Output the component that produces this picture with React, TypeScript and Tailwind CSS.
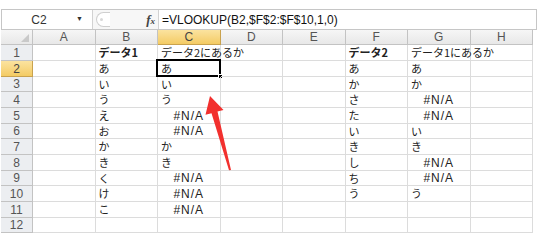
import React from 'react';

type Cell = { t: string; bold?: boolean };

const cols = ['A', 'B', 'C', 'D', 'E', 'F', 'G', 'H'];
const colB = ['あ', 'い', 'う', 'え', 'お', 'か', 'き', 'く', 'け', 'こ'];
const colC = ['あ', 'い', 'う', '#N/A', '#N/A', 'か', 'き', '#N/A', '#N/A', '#N/A'];
const colF = ['あ', 'か', 'さ', 'た', 'い', 'き', 'し', 'ち', 'う'];
const colG = ['あ', 'か', '#N/A', '#N/A', 'い', 'き', '#N/A', '#N/A', 'う'];

// row heights alternate a little so 12 rows end where the sheet ends
const rowH = ['h-[16px]', 'h-[16px]', 'h-[15px]', 'h-[16px]', 'h-[16px]', 'h-[15px]', 'h-[16px]', 'h-[16px]', 'h-[15px]', 'h-[16px]', 'h-[16px]', 'h-[15px]'];

const rows: Cell[][] = Array.from({ length: 12 }, (_, r) => {
  if (r === 0) {
    return [
      { t: '' },
      { t: 'データ1', bold: true },
      { t: 'データ2にあるか' },
      { t: '' },
      { t: '' },
      { t: 'データ2', bold: true },
      { t: 'データ1にあるか' },
      { t: '' },
    ];
  }
  const i = r - 1;
  return [
    { t: '' },
    { t: colB[i] ?? '' },
    { t: colC[i] ?? '' },
    { t: '' },
    { t: '' },
    { t: colF[i] ?? '' },
    { t: colG[i] ?? '' },
    { t: '' },
  ];
});

const jp = "font-['Noto_Sans_CJK_JP','Liberation_Sans',sans-serif]";
const lat = "font-['Liberation_Sans',Arial,sans-serif]";

function GridCell({ cell, selected }: { cell: Cell; selected: boolean }) {
  const isErr = cell.t === '#N/A';
  return (
    <div className="relative flex items-center border-r border-b border-[#dcdcdc] overflow-visible">
      {isErr ? (
        <span className={`w-full text-center text-[12px] leading-none tracking-[1px] text-[#222] ${lat}`}>{cell.t}</span>
      ) : (
        <span
          className={`pl-[3px] whitespace-nowrap text-[11px] leading-none text-[#222] ${jp} ${cell.bold ? 'font-bold' : ''}`}
        >
          {cell.t}
        </span>
      )}
      {selected && (
        <div className="absolute -left-[2px] -top-[2px] -right-px -bottom-px border-2 border-black">
          <div className="absolute -right-[4px] -bottom-[4px] w-[5px] h-[5px] bg-black border border-white" />
        </div>
      )}
    </div>
  );
}

export default function App() {
  return (
    <div className={`relative w-[539px] h-[240px] overflow-hidden bg-white ${lat}`}>
      {/* Formula bar */}
      <div className="mt-[9px] ml-px mr-[2px] flex h-[21px] border border-[#c6c6c6] bg-white">
        <div className="flex w-[91px] items-center border-r border-[#d2d2d2]">
          <span className="w-[74px] text-center text-[12px] text-[#333]">C2</span>
          <span className="text-[7px] text-[#333]">▼</span>
        </div>
        <div className="flex w-[65px] items-center bg-[#f7f7f7]">
          <div className="ml-[3px] flex h-[15px] w-[14px] items-center rounded-l-full border-l border-y border-[#cfcfcf] bg-white pl-[3px]">
            <span className="h-[3px] w-[3px] rounded-full bg-[#d8d8d8]" />
          </div>
          <span className="ml-auto mr-[3px] font-['Liberation_Serif',serif] text-[13px] font-bold italic leading-none text-[#444]">
            f<span className="text-[9px]">x</span>
          </span>
        </div>
        <div className="flex flex-1 items-center border-l border-[#d2d2d2] pl-[3px] text-[12px] text-[#111]">
          =VLOOKUP(B2,$F$2:$F$10,1,0)
        </div>
      </div>

      {/* Sheet */}
      <div className="ml-px w-[533px]">
        <div className="grid h-[15px] grid-cols-[32px_repeat(8,62.5px)]">
          <div className="relative border-r border-b border-[#c3c3c3] bg-linear-to-b from-[#f6f6f6] to-[#e8e8e8]">
            <svg className="absolute right-[3px] bottom-[2px]" width="8" height="8">
              <polygon points="8,0 8,8 0,8" fill="#c9c9c9" />
            </svg>
          </div>
          {cols.map((c) => (
            <div
              key={c}
              className={`flex items-center justify-center border-r border-b text-[12px] leading-none ${
                c === 'C'
                  ? 'border-[#c9a24e] bg-linear-to-b from-[#fbe39f] to-[#f4cb63] text-[#444]'
                  : 'border-[#c3c3c3] bg-linear-to-b from-[#f6f6f6] to-[#e8e8e8] text-[#555]'
              }`}
            >
              {c}
            </div>
          ))}
        </div>
        {rows.map((row, r) => (
          <div key={r} className={`grid ${rowH[r]} grid-cols-[32px_repeat(8,62.5px)]`}>
            <div
              className={`flex items-center justify-center border-r border-b text-[12px] leading-none ${
                r === 1
                  ? 'border-[#c9a24e] bg-linear-to-b from-[#fbe39f] to-[#f4cb63] text-[#444]'
                  : 'border-[#c3c3c3] bg-[#eceef1] text-[#555]'
              }`}
            >
              {r + 1}
            </div>
            {row.map((cell, ci) => (
              <GridCell key={ci} cell={cell} selected={r === 1 && ci === 2} />
            ))}
          </div>
        ))}
      </div>

      {/* Red arrow */}
      <svg className="absolute left-0 top-0 pointer-events-none" width="539" height="240">
        <polygon
          points="210,96 223.5,110 217.5,111.6 231,170 229,170.3 211.5,113.2 205.5,114.8"
          fill="#f2302e"
        />
      </svg>
    </div>
  );
}
